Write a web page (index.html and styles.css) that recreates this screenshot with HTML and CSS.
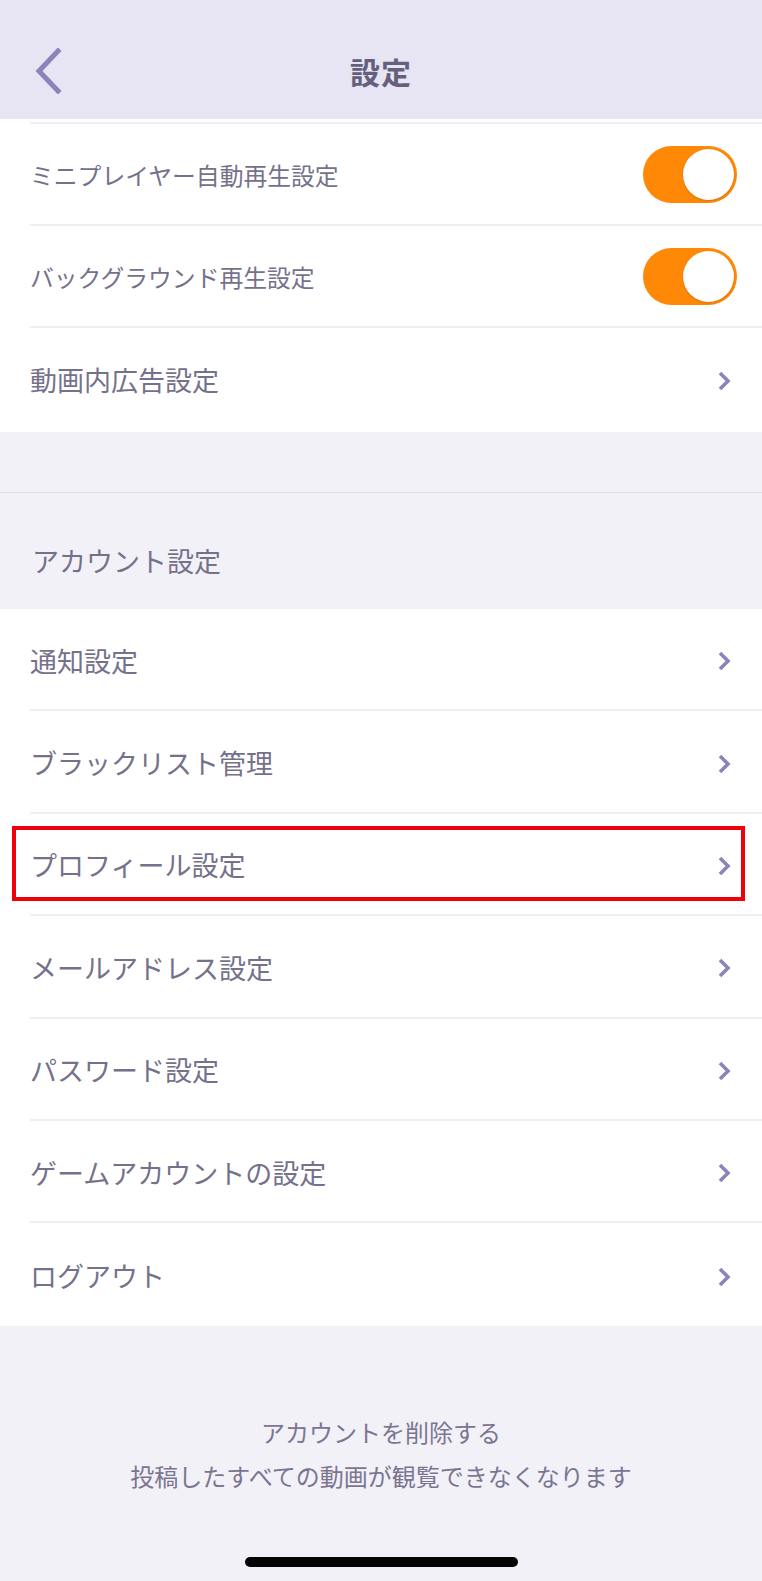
FILE: index.html
```html
<!DOCTYPE html>
<html lang="ja">
<head>
<meta charset="utf-8">
<title>設定</title>
<link rel="stylesheet" href="styles.css">
</head>
<body>
<div class="screen">
  <header class="header">
    <div class="back">
      <svg width="30" height="46" viewBox="0 0 30 46"><path d="M25 3 L6 23 L25 43" fill="none" stroke="#8b84bb" stroke-width="5" stroke-linecap="square" stroke-linejoin="miter"/></svg>
    </div>
    <h1 class="title">設定</h1>
    <div></div>
  </header>

  <section class="list top">
    <div class="sep-partial"></div>
    <div class="row small">
      <span class="label">ミニプレイヤー自動再生設定</span>
      <span class="toggle"><span class="knob"></span></span>
    </div>
    <div class="row small">
      <span class="label">バックグラウンド再生設定</span>
      <span class="toggle"><span class="knob"></span></span>
    </div>
    <div class="row">
      <span class="label">動画内広告設定</span>
      <svg class="chev" width="14" height="22" viewBox="0 0 14 22"><path d="M3 3 L11 11 L3 19" fill="none" stroke="#8b84b8" stroke-width="3.6"/></svg>
    </div>
  </section>

  <div class="gap"></div>
  <div class="section-head">アカウント設定</div>

  <section class="list bottom">
    <div class="row">
      <span class="label">通知設定</span>
      <svg class="chev" width="14" height="22" viewBox="0 0 14 22"><path d="M3 3 L11 11 L3 19" fill="none" stroke="#8b84b8" stroke-width="3.6"/></svg>
    </div>
    <div class="row">
      <span class="label">ブラックリスト管理</span>
      <svg class="chev" width="14" height="22" viewBox="0 0 14 22"><path d="M3 3 L11 11 L3 19" fill="none" stroke="#8b84b8" stroke-width="3.6"/></svg>
    </div>
    <div class="row highlighted">
      <span class="label">プロフィール設定</span>
      <svg class="chev" width="14" height="22" viewBox="0 0 14 22"><path d="M3 3 L11 11 L3 19" fill="none" stroke="#8b84b8" stroke-width="3.6"/></svg>
      <span class="mark"></span>
    </div>
    <div class="row">
      <span class="label">メールアドレス設定</span>
      <svg class="chev" width="14" height="22" viewBox="0 0 14 22"><path d="M3 3 L11 11 L3 19" fill="none" stroke="#8b84b8" stroke-width="3.6"/></svg>
    </div>
    <div class="row">
      <span class="label">パスワード設定</span>
      <svg class="chev" width="14" height="22" viewBox="0 0 14 22"><path d="M3 3 L11 11 L3 19" fill="none" stroke="#8b84b8" stroke-width="3.6"/></svg>
    </div>
    <div class="row">
      <span class="label">ゲームアカウントの設定</span>
      <svg class="chev" width="14" height="22" viewBox="0 0 14 22"><path d="M3 3 L11 11 L3 19" fill="none" stroke="#8b84b8" stroke-width="3.6"/></svg>
    </div>
    <div class="row">
      <span class="label">ログアウト</span>
      <svg class="chev" width="14" height="22" viewBox="0 0 14 22"><path d="M3 3 L11 11 L3 19" fill="none" stroke="#8b84b8" stroke-width="3.6"/></svg>
    </div>
  </section>

  <footer class="footer">
    <p class="delete">アカウントを削除する</p>
    <p class="delete">投稿したすべての動画が観覧できなくなります</p>
    <div class="home-bar"></div>
  </footer>
</div>
</body>
</html>
```

FILE: styles.css
```css
* { box-sizing: border-box; }
html, body { margin: 0; padding: 0; }
body {
  width: 762px;
  height: 1581px;
  overflow: hidden;
  background: #f3f1f8;
  font-family: "Noto Sans CJK JP", "Noto Sans", sans-serif;
  color: #75718b;
}
.screen {
  display: flex;
  flex-direction: column;
  height: 1581px;
}
.header {
  height: 119px;
  background: #e7e5f3;
  display: grid;
  grid-template-columns: 1fr auto 1fr;
  align-items: center;
  padding-top: 22px;
}
.back {
  padding-left: 33px;
  display: flex;
  align-items: center;
}
.title {
  margin: 0;
  font-size: 30px;
  font-weight: 700;
  color: #645f7c;
  letter-spacing: 1px;
}
.list {
  background: #ffffff;
}
.list.top {
  padding-top: 3px;
  padding-bottom: 2px;
}
.sep-partial {
  margin-left: 30px;
  height: 2px;
  background: #efeef3;
}
.row {
  position: relative;
  margin-left: 30px;
  height: 102px;
  padding-right: 25px;
  border-bottom: 2px solid #efeef3;
  display: flex;
  align-items: center;
  justify-content: space-between;
}
.list.bottom .row {
  height: 102.4px;
}
.row:last-child { border-bottom: none; }
.label {
  font-size: 27px;
  line-height: 1.3;
  padding-top: 2px;
}
.row.small .label {
  font-size: 23.8px;
}
.chev {
  margin-right: 6px;
  margin-top: 4px;
}
.toggle {
  width: 94px;
  height: 57px;
  border-radius: 29px;
  background: #ff8806;
  display: flex;
  align-items: center;
  justify-content: flex-end;
  padding-right: 3px;
}
.knob {
  width: 51px;
  height: 51px;
  border-radius: 50%;
  background: #ffffff;
  box-shadow: 0 1px 2px rgba(150, 70, 0, 0.35);
}
.gap {
  height: 61px;
  border-bottom: 1.5px solid #dedce6;
}
.section-head {
  font-size: 27px;
  line-height: 40px;
  padding: 48px 30px 28px 32px;
}
.mark {
  position: absolute;
  left: -18px;
  right: 17px;
  top: 12px;
  bottom: 13px;
  border: 4px solid #f0000a;
}
.footer {
  flex: 1;
  display: flex;
  flex-direction: column;
  align-items: center;
  padding-top: 84px;
}
.delete {
  margin: 0;
  font-size: 24px;
  line-height: 44px;
  color: #7a7691;
}
.home-bar {
  margin-top: 59px;
  width: 273px;
  height: 10px;
  border-radius: 5px;
  background: #050505;
}
```
